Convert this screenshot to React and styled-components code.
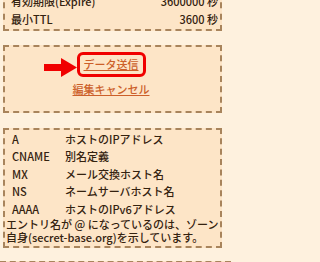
import React from "react";
import styled, { createGlobalStyle } from "styled-components";

const GlobalStyle = createGlobalStyle`
  html, body {
    margin: 0;
    padding: 0;
    background: #fef1de;
  }
  body {
    font-family: "Noto Sans CJK JP", "Noto Sans", sans-serif;
    font-size: 11px;
    font-weight: 500;
    color: #34220f;
  }
`;

const Page = styled.div`
  width: 231px;
  box-sizing: border-box;
  height: 262px;
  overflow: hidden;
  padding: 0 9px 0 3px;
`;

const Box = styled.div`
  position: relative;
  border: 2px dashed #a8845c;
  background: #fde5c7;
  margin-top: ${(p) => p.$mt || 0}px;
  margin-bottom: ${(p) => p.$mb ?? 14}px;
`;

const InfoRow = styled.div`
  display: flex;
  justify-content: space-between;
  line-height: 17.75px;
  padding: 0 2px 0 6px;
`;

const Actions = styled.div`
  display: flex;
  flex-direction: column;
  align-items: center;
  padding: 5px 3px 12.5px 0;
`;

const Highlight = styled.span`
  position: relative;
  display: inline-block;
  border: 3px solid #f00000;
  border-radius: 6px;
  padding: 0 4px;
  line-height: 19px;
`;

const Arrow = styled.svg`
  position: absolute;
  right: calc(100% + 2px);
  top: 3px;
  width: 34px;
  height: 20px;
`;

const ActionLink = styled.a`
  color: #cc5f2a;
  text-decoration: underline;
  line-height: 18px;
  margin-top: ${(p) => p.$mt || 0}px;
  cursor: pointer;
`;

const TypeGrid = styled.div`
  display: grid;
  grid-template-columns: 60px 1fr;
  line-height: 17.5px;
  padding-top: 1px;
`;

const TypeName = styled.span`
  padding-left: 7px;
`;

const Note = styled.p`
  margin: 0;
  padding: 0 0 2px 1px;
  line-height: 13px;
`;

const Footer = styled.div`
  margin: 0 -9px 0 -3px;
  border-top: 2px dashed #a8845c;
  background: #fde5c7;
  height: 20px;
`;

const types = [
  ["A", "ホストのIPアドレス"],
  ["CNAME", "別名定義"],
  ["MX", "メール交換ホスト名"],
  ["NS", "ネームサーバホスト名"],
  ["AAAA", "ホストのIPv6アドレス"],
];

export default function App() {
  return (
    <>
      <GlobalStyle />
      <Page>
        <Box $mt={-9}>
          <InfoRow>
            <span>有効期限(Expire)</span>
            <span>3600000 秒</span>
          </InfoRow>
          <InfoRow>
            <span>最小TTL</span>
            <span>3600 秒</span>
          </InfoRow>
        </Box>
        <Box $mb={15}>
          <Actions>
            <Highlight>
              <Arrow viewBox="0 0 34 20">
                <rect x="0" y="6" width="18" height="7" fill="#f00000" />
                <polygon points="17,0 17,19 33,9.5" fill="#f00000" />
              </Arrow>
              <ActionLink>データ送信</ActionLink>
            </Highlight>
            <ActionLink $mt={3.5}>編集キャンセル</ActionLink>
          </Actions>
        </Box>
        <Box $mb={13}>
          <TypeGrid>
            {types.map(([k, v]) => (
              <React.Fragment key={k}>
                <TypeName>{k}</TypeName>
                <span>{v}</span>
              </React.Fragment>
            ))}
          </TypeGrid>
          <Note>
            エントリ名が @ になっているのは、ゾーン
            <br />
            自身(secret-base.org)を示しています。
          </Note>
        </Box>
        <Footer />
      </Page>
    </>
  );
}
